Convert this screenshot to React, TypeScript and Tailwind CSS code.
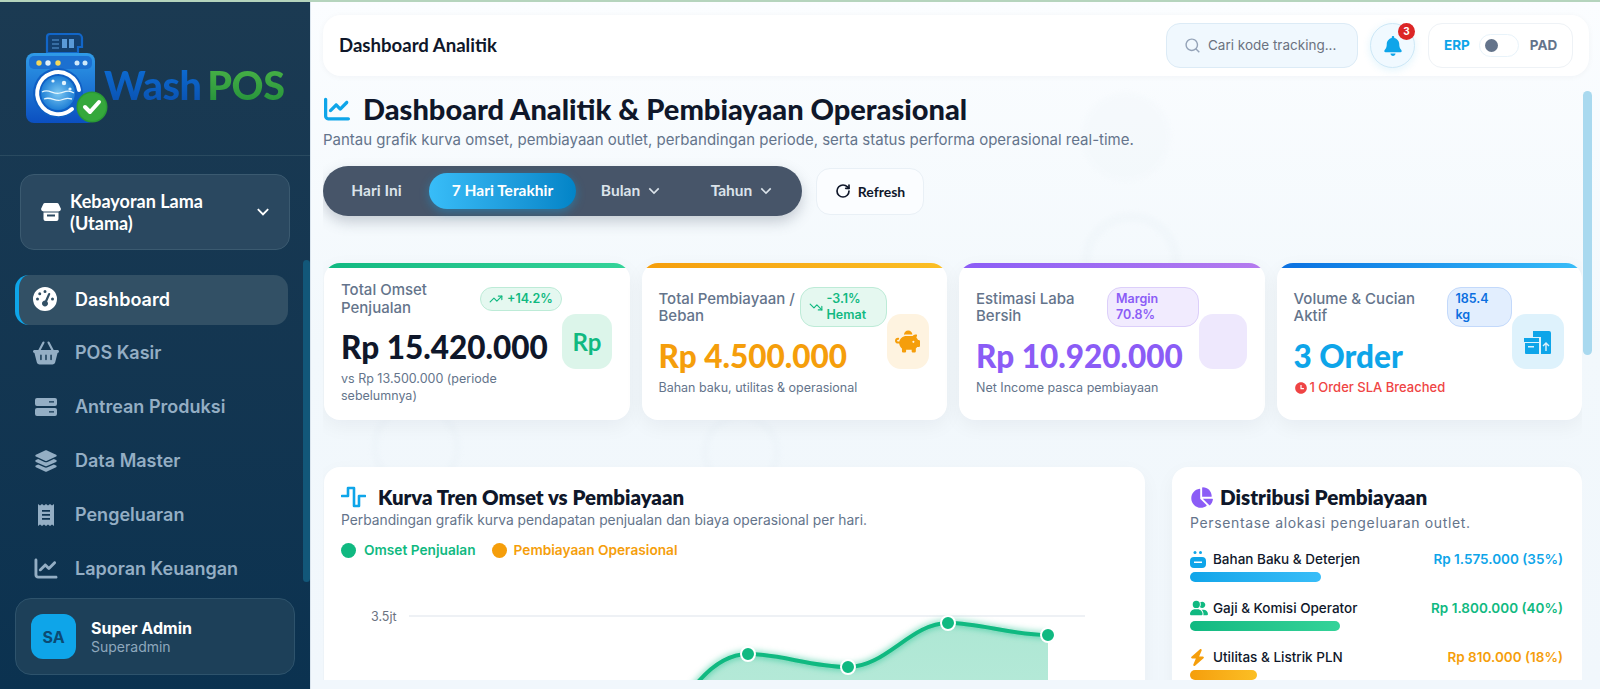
import React from "react";
import { RiArrowDownSLine, RiSearchLine, RiTimeFill } from "react-icons/ri";
import { FaPiggyBank, FaGaugeHigh, FaBasketShopping, FaLayerGroup, FaChartLine, FaBell, FaChartPie, FaUserGroup, FaBolt } from "react-icons/fa6";
import { TrendingUp, TrendingDown, RotateCw } from "lucide-react";

const head = "font-['Lato','Liberation_Sans',sans-serif]";

function Logo() {
  return (
    <svg width="82" height="92" viewBox="0 0 82 92" className="shrink-0">
      <defs>
        <linearGradient id="body" x1="0" y1="0" x2="0" y2="1"><stop offset="0" stopColor="#2f9be8" /><stop offset="1" stopColor="#0b4fc0" /></linearGradient>
        <radialGradient id="drum"><stop offset="0" stopColor="#7cc8f2" /><stop offset="1" stopColor="#1f7fd6" /></radialGradient>
      </defs>
      <path d="M21 21V5a3 3 0 0 1 3-3h28a4 4 0 0 1 4 4v9h-4v6z" fill="#14406f" stroke="#1266c8" strokeWidth="2.2" />
      <path d="M26 8h7M26 12h7M26 16h7" stroke="#5a9ad8" strokeWidth="1.2" />
      <rect x="36" y="7" width="5" height="9" fill="#5a9ad8" /><rect x="43" y="7" width="5" height="9" fill="#5a9ad8" />
      <rect x="0" y="21" width="69" height="70" rx="8" fill="url(#body)" />
      <rect x="3" y="24" width="63" height="13" rx="5" fill="#1c70d0" />
      <circle cx="13" cy="31" r="2.7" fill="#f5d85a" /><circle cx="22" cy="31" r="2.7" fill="#dff1fb" /><circle cx="32" cy="31" r="2.7" fill="#f5d85a" />
      <circle cx="51" cy="31" r="2.5" fill="#cfe9fa" /><circle cx="59" cy="31" r="2.5" fill="#cfe9fa" />
      <circle cx="32" cy="61" r="25" fill="#0f5fc4" />
      <circle cx="32" cy="61" r="17" fill="url(#drum)" />
      <path d="M16 60c7-4 11 3 18 1s9-3 14 0M18 67c7-3 11 3 17 1s7-2 11-1" stroke="#e3f4fd" strokeWidth="1.3" fill="none" />
      <circle cx="38" cy="51" r="2.2" fill="#e3f4fd" /><circle cx="27" cy="49" r="1.6" fill="#e3f4fd" /><circle cx="44" cy="57" r="1.6" fill="#e3f4fd" />
      <path d="M53 58A21 21 0 1 0 46 77" fill="none" stroke="#fff" strokeWidth="4" strokeLinecap="round" />
      <circle cx="66" cy="75" r="15.5" fill="#2a9a35" />
      <circle cx="66" cy="75" r="14" fill="#35a83c" />
      <path d="M59 75l5 5 9-10" fill="none" stroke="#fff" strokeWidth="4" strokeLinecap="round" strokeLinejoin="round" />
    </svg>
  );
}

function ServerIcon({ className }: { className?: string }) {
  return (
    <svg viewBox="0 0 24 20" className={className} fill="currentColor">
      <path fillRule="evenodd" d="M3 1h18a2 2 0 0 1 2 2v4a2 2 0 0 1-2 2H3a2 2 0 0 1-2-2V3a2 2 0 0 1 2-2zm12 3.2v1.3h5V4.200z" />
      <path fillRule="evenodd" d="M3 11h18a2 2 0 0 1 2 2v4a2 2 0 0 1-2 2H3a2 2 0 0 1-2-2v-4a2 2 0 0 1 2-2zm12 3.200v1.300h5v-1.300z" />
    </svg>
  );
}

function ReceiptIcon({ className }: { className?: string }) {
  return (
    <svg viewBox="0 0 20 24" className={className} fill="currentColor">
      <path fillRule="evenodd" d="M2 1l2 1.400L6 1l2 1.400L10 1l2 1.400L14 1l2 1.400L18 1v22l-2-1.400L14 23l-2-1.400L10 23l-2-1.400L6 23l-2-1.400L2 23zM6 7v1.800h8V7zm0 4v1.800h8V11zm0 4v1.800h8V15z" />
    </svg>
  );
}

function StoreIcon({ className }: { className?: string }) {
  return (
    <svg viewBox="0 0 20 20" className={className} fill="currentColor">
      <path d="M4 1h12a2 2 0 0 1 1.800 1.200L20 7a2.600 2.600 0 0 1-2.600 2.400H2.600A2.600 2.600 0 0 1 0 7l2.200-4.800A2 2 0 0 1 4 1z" />
      <path fillRule="evenodd" d="M2.500 10.500h15V17a2 2 0 0 1-2 2h-11a2 2 0 0 1-2-2zM6 12.500v2h8v-2z" />
    </svg>
  );
}

const navItems = [
  { label: "POS Kasir", icon: <FaBasketShopping className="w-[26px] h-[26px]" /> },
  { label: "Antrean Produksi", icon: <ServerIcon className="w-[24px] h-[20px]" /> },
  { label: "Data Master", icon: <FaLayerGroup className="w-[24px] h-[24px]" /> },
  { label: "Pengeluaran", icon: <ReceiptIcon className="w-[20px] h-[24px]" /> },
  { label: "Laporan Keuangan", icon: <FaChartLine className="w-[24px] h-[23px]" /> },
];

function Sidebar() {
  return (
    <aside className="w-[310px] shrink-0 flex flex-col bg-gradient-to-b from-[#1b3a52] to-[#0b3250] relative">
      <div className="h-[154px] shrink-0 border-b border-[#2a4a60] pt-[30px] pl-[26px] flex items-start">
        <Logo />
        <div className={`${head} -ml-[4px] mt-[30px] text-[39.500px] leading-[46px] font-black tracking-[-0.5px] flex gap-[6px]`}>
          <span className="bg-gradient-to-b from-[#0d6fd6] to-[#0a4fae] bg-clip-text text-transparent">Wash</span>
          <span className="bg-gradient-to-b from-[#4cb648] to-[#1f8f3a] bg-clip-text text-transparent">POS</span>
        </div>
      </div>
      <div className="mx-[20px] mt-[18px] h-[76px] w-[270px] rounded-[14px] bg-[#2a4860] border border-[#3b5a70] flex items-center pl-[20px] pr-[15px] text-white">
        <StoreIcon className="w-[20px] h-[20px] shrink-0 text-white" />
        <div className={`${head} ml-[9px] flex-1 text-[18px] leading-[22px] font-bold`}>Kebayoran Lama (Utama)</div>
        <RiArrowDownSLine className="w-[22px] h-[22px] shrink-0 text-white" />
      </div>
      <nav className="mt-[25px] flex-1 flex flex-col gap-[4px] pl-[15px] font-['Inter',sans-serif]">
        <div className="w-[273px] h-[50px] rounded-[14px] bg-[#325065] border-l-[4px] border-[#0ea5e9] flex items-center pl-[14px] pb-[2px] text-white text-[18px] font-semibold">
          <FaGaugeHigh className="w-[24px] h-[24px] shrink-0" />
          <span className="ml-[18px]">Dashboard</span>
        </div>
        {navItems.map(({ label, icon }) => (
          <div key={label} className="w-[273px] h-[50px] flex items-center pb-[3px] text-[#94aec4] text-[18px] font-semibold">
            <span className="w-[60px] pl-[2px] flex justify-center shrink-0">{icon}</span>
            <span>{label}</span>
          </div>
        ))}
      </nav>
      <div className="absolute right-0 top-[258px] w-[7px] h-[322px] rounded-[4px] bg-[#125779]" />
      <div className="ml-[15px] mb-[14px] w-[280px] h-[77px] shrink-0 rounded-[16px] bg-[#1d4059] border border-[#2e536c] flex items-center pl-[15px] font-['Inter',sans-serif]">
        <div className="w-[45px] h-[45px] rounded-[12px] bg-[#0ea5e9] flex items-center justify-center text-[#0b4a73] font-bold text-[16px]">SA</div>
        <div className="ml-[15px]">
          <div className="text-white font-bold text-[16px] leading-[20px]">Super Admin</div>
          <div className="text-[#8fa8bd] text-[14px] leading-[18px]">Superadmin</div>
        </div>
      </div>
    </aside>
  );
}

function Header() {
  return (
    <header className="relative ml-[12px] mt-[13px] w-[1266px] h-[61px] shrink-0 rounded-[18px] bg-white shadow-[0_1px_6px_rgba(15,23,42,0.04)] flex items-center pl-[16px] pr-[16px]">
      <div className={`${head} flex-1 text-[18.600px] font-bold text-[#0f172a]`}>Dashboard Analitik</div>
      <div className="w-[192px] h-[45px] rounded-[14px] bg-[#f0f8fe] border border-[#dcebf6] flex items-center pl-[17px] font-['Inter',sans-serif] text-[13.500px] text-[#6b7280]">
        <RiSearchLine className="w-[17px] h-[17px] text-[#94a3b8] shrink-0" />
        <span className="ml-[7px] whitespace-nowrap">Cari kode tracking...</span>
      </div>
      <div className="ml-[12px] relative w-[45px] h-[45px] rounded-full bg-[#f0f9ff] border border-[#cde8f7] shadow-[0_2px_8px_rgba(14,165,233,0.12)] flex items-center justify-center text-[#0ea5e9]">
        <FaBell className="w-[20px] h-[20px]" />
        <span className="absolute -top-[1px] -right-[1px] w-[17px] h-[17px] rounded-full bg-[#dc2626] text-white text-[10px] font-bold flex items-center justify-center font-['Inter',sans-serif]">3</span>
      </div>
      <div className="ml-[13px] w-[145px] h-[45px] rounded-[14px] bg-white border border-[#eef2f6] flex items-center pl-[15px] font-['Inter',sans-serif] text-[13.500px] font-bold">
        <span className="text-[#0ea5e9]">ERP</span>
        <span className="ml-[9px] w-[40px] h-[23px] rounded-full border border-[#e8f3fa] bg-white flex items-center pl-[5px]">
          <span className="w-[13px] h-[13px] rounded-full bg-[#64748b]" />
        </span>
        <span className="ml-[11px] text-[#64748b]">PAD</span>
      </div>
    </header>
  );
}

function Tabs() {
  const Chevron = <RiArrowDownSLine className="w-[20px] h-[20px] ml-[4px]" />;
  return (
    <div className="mt-[16px] flex items-center">
      <div className={`${head} w-[479px] h-[50px] rounded-full bg-[#475569] shadow-[0_6px_14px_rgba(71,85,105,0.28)] flex items-center pl-[6px] gap-[5px] text-[15.500px] font-bold text-[#dbe3ea]`}>
        <div className="w-[95px] h-[36px] flex items-center justify-center">Hari Ini</div>
        <div className="w-[147px] h-[36px] rounded-full bg-gradient-to-r from-[#38bdf8] to-[#0284c7] text-white flex items-center justify-center shadow-[0_3px_10px_rgba(14,165,233,0.4)]">7 Hari Terakhir</div>
        <div className="w-[103px] h-[36px] flex items-center justify-center">Bulan{Chevron}</div>
        <div className="w-[109px] h-[36px] flex items-center justify-center">Tahun{Chevron}</div>
      </div>
      <div className={`${head} ml-[14px] w-[108px] h-[47px] rounded-[14px] bg-[#fbfdff] border border-[#e9f0f6] flex items-center justify-center gap-[7px] text-[14px] font-bold text-[#0f172a]`}>
        <RotateCw className="w-[16px] h-[16px]" strokeWidth={2.500} />
        Refresh
      </div>
    </div>
  );
}

type KpiProps = {
  bar: string; label: string; badge: React.ReactNode; badgeCls: string; value: string; valueCls: string;
  sub: React.ReactNode; iconCls: string; icon?: React.ReactNode; colW: string; iconW: string; labelW: string;
};

function Kpi({ bar, label, badge, badgeCls, value, valueCls, sub, iconCls, icon, colW, iconW, labelW }: KpiProps) {
  return (
    <div className="h-[157px] rounded-[16px] bg-white shadow-[0_6px_20px_rgba(15,23,42,0.05)] overflow-hidden flex flex-col">
      <div className={`h-[5px] shrink-0 ${bar}`} />
      <div className="flex-1 flex items-center pl-[17px]">
        <div className={`${colW} shrink-0 mb-[5px]`}>
          <div className="flex items-center min-h-[38px]">
            <div className={`${labelW} shrink-0 font-['Inter',sans-serif] text-[15px] leading-[17.500px] font-medium text-[#64748b]`}>{label}</div>
            <div className={`flex-1 rounded-[14px] border px-[8px] py-[3px] font-['Inter',sans-serif] text-[12.500px] leading-[16px] font-semibold ${badgeCls}`}>{badge}</div>
          </div>
          <div className={`${head} mt-[9px] text-[31.500px] leading-[40px] font-black whitespace-nowrap ${valueCls}`}>{value}</div>
          <div className="mt-[3px] pr-[20px] font-['Inter',sans-serif] text-[12.500px] leading-[17px] text-[#64748b]">{sub}</div>
        </div>
        <div className={`${iconW} h-[55px] mb-[5px] shrink-0 rounded-[14px] flex items-center justify-center ${iconCls}`}>{icon}</div>
      </div>
    </div>
  );
}

function Chart() {
  const line = "M307 190C340 120 370 78 407 78C440 78 470 91 507 91C545 91 570 47 607 47C640 47 670 59 707 59";
  return (
    <svg width="790" height="110" viewBox="0 0 790 110" className="mt-[17px] block overflow-visible">
      <defs>
        <linearGradient id="area" x1="0" y1="0" x2="0" y2="1"><stop offset="0" stopColor="#10b981" stopOpacity="0.34" /><stop offset="1" stopColor="#10b981" stopOpacity="0.28" /></linearGradient>
        <filter id="glow" x="-10%" y="-50%" width="120%" height="200%"><feGaussianBlur stdDeviation="3" /></filter>
      </defs>
      <line x1="68" y1="40" x2="744" y2="40" stroke="#e8edf2" strokeWidth="1.500" />
      <text x="30" y="45" fontSize="12.500" fill="#6b7280" fontFamily="Inter, sans-serif">3.5jt</text>
      <path d={`${line}V190Z`} fill="url(#area)" />
      <path d={line} fill="none" stroke="#10b981" strokeOpacity="0.5" strokeWidth="6" filter="url(#glow)" />
      <path d={line} fill="none" stroke="#10b981" strokeWidth="4" />
      {[[407, 78], [507, 91], [607, 47], [707, 59]].map(([x, y]) => (
        <circle key={x} cx={x} cy={y} r="7" fill="#10b981" stroke="#fff" strokeWidth="2" />
      ))}
    </svg>
  );
}

function Dist({ Icon, label, amount, color, bar, w }: { Icon: React.ReactNode; label: string; amount: string; color: string; bar: string; w: string }) {
  return (
    <div className="h-[49px]">
      <div className="flex items-center h-[20px] text-[13.500px] font-semibold font-['Inter',sans-serif]">
        <span className="w-[23px] shrink-0 flex items-center">{Icon}</span>
        <span className="flex-1 text-[#0f172a] font-medium">{label}</span>
        <span className={color}>{amount}</span>
      </div>
      <div className={`mt-[3px] h-[10px] rounded-full ${bar} ${w}`} />
    </div>
  );
}

export default function App() {
  return (
    <div className="w-[1600px] h-[689px] overflow-hidden flex flex-col bg-[#f1f7fc]">
      <div className="h-[2px] shrink-0 bg-[#b5d4bd]" />
      <div className="flex-1 flex min-h-0">
        <Sidebar />
        <main className="w-[1290px] flex flex-col border-l border-[#dbe5ee] bg-gradient-to-b from-[#fbfdff] via-[#f2f8fc] to-[#f1f7fc] relative overflow-hidden">
          <div className="absolute left-[770px] top-[90px] w-[90px] h-[90px] rounded-full bg-[#eef4f8] opacity-25 blur-[2px]" />
          <div className="absolute left-[770px] top-[210px] w-[100px] h-[100px] rounded-full border-[10px] border-[#e9f1f6] opacity-30 blur-[2px]" />
          <div className="absolute left-[60px] top-[400px] w-[90px] h-[90px] rounded-full border-[8px] border-[#e8f0f6] opacity-30 blur-[2px]" />
          <div className="absolute left-[390px] top-[410px] w-[80px] h-[80px] rounded-full border-[8px] border-[#e8f0f6] opacity-30 blur-[2px]" />
          <Header />
          <div className="absolute right-[8px] top-[89px] w-[9px] h-[264px] rounded-[5px] bg-[#a9d9ef]" />
          <div className="relative ml-[12px] mr-[18px] mb-[9px] flex-1 min-h-0 overflow-hidden">
            <div className="mt-[15px] flex items-center h-[36px]">
              <FaChartLine className="w-[28px] h-[26px] text-[#0ea5e9] -ml-[0px]" />
              <h1 className={`${head} ml-[12px] text-[29px] leading-[36px] font-black text-[#0f172a] whitespace-nowrap`}>Dashboard Analitik &amp; Pembiayaan Operasional</h1>
            </div>
            <p className="mt-[3px] font-['Inter',sans-serif] text-[15px] leading-[20px] text-[#64748b] whitespace-nowrap">Pantau grafik kurva omset, pembiayaan outlet, perbandingan periode, serta status performa operasional real-time.</p>
            <Tabs />
            <div className="mt-[47px] ml-[1px] grid grid-cols-4 gap-[12px]">
              <Kpi bar="bg-gradient-to-r from-[#10b981] to-[#34d399]" label="Total Omset Penjualan" labelW="w-[139px]" colW="w-[221px]" iconW="w-[50px]"
                badge={<span className="flex items-center gap-[4px] whitespace-nowrap"><TrendingUp className="w-[14px] h-[14px]" />+14.2%</span>}
                badgeCls="bg-[#e5f8f0] border-[#bdebd7] text-[#10b981]" value="Rp 15.420.000" valueCls="text-[#0f172a]" sub="vs Rp 13.500.000 (periode sebelumnya)" iconCls="bg-[#dcf5ea] text-[#10b981]"
                icon={<span className={`${head} text-[24px] font-bold`}>Rp</span>} />
              <Kpi bar="bg-gradient-to-r from-[#f59e0b] to-[#fbbf24]" label="Total Pembiayaan / Beban" labelW="w-[141px]" colW="w-[228px]" iconW="w-[42px]"
                badge={<span className="flex items-center gap-[4px]"><TrendingDown className="w-[14px] h-[14px] shrink-0" /><span>-3.1% Hemat</span></span>}
                badgeCls="bg-[#e5f8f0] border-[#bdebd7] text-[#10b981]" value="Rp 4.500.000" valueCls="text-[#f59e0b]" sub="Bahan baku, utilitas & operasional" iconCls="bg-[#fef3e0] text-[#f59e0b]"
                icon={<FaPiggyBank className="w-[25px] h-[25px]" />} />
              <Kpi bar="bg-gradient-to-r from-[#8b5cf6] to-[#b57bee]" label="Estimasi Laba Bersih" labelW="w-[131px]" colW="w-[223px]" iconW="w-[48px]"
                badge="Margin 70.8%" badgeCls="bg-[#f1ebfe] border-[#dccffa] text-[#8b5cf6]" value="Rp 10.920.000" valueCls="text-[#8b5cf6]" sub="Net Income pasca pembiayaan" iconCls="bg-[#eee8fd]" />
              <Kpi bar="bg-gradient-to-r from-[#0b6fe0] to-[#38bdf8]" label="Volume & Cucian Aktif" labelW="w-[153px] pr-[25px]" colW="w-[218px]" iconW="w-[52px]"
                badge="185.4 kg" badgeCls="bg-[#e2eefe] border-[#c3d9fb] text-[#0b6fe0]" value="3 Order" valueCls="text-[#0ea5e9]"
                sub={<span className="flex items-center gap-[2px] whitespace-nowrap text-[#ef4444] font-medium text-[13px]"><RiTimeFill className="w-[14px] h-[14px]" />1 Order SLA Breached</span>} iconCls="bg-[#def2fc] text-[#0ea5e9]"
                icon={
                  <svg width="28" height="28" viewBox="0 0 28 28" fill="currentColor">
                    <path d="M9 3h16a2 2 0 0 1 2 2v20a1 1 0 0 1-1 1H17V9H9z" />
                    <rect x="0" y="10" width="15" height="4" />
                    <path d="M1 15h14v11H2a1 1 0 0 1-1-1zM4 18v1.600h6V18z" fillRule="evenodd" />
                    <path d="M22 23v-8M19 18l3-3 3 3" stroke="#def2fc" strokeWidth="1.400" fill="none" />
                  </svg>
                } />
            </div>
            <div className="mt-[47px] ml-[1px] flex items-start">
              <section className="w-[821px] h-[400px] rounded-[16px] bg-white pt-[18px] pl-[17px] shadow-[0_6px_20px_rgba(15,23,42,0.04)]">
                <div className="flex items-center h-[24px]">
                  <svg width="25" height="22" viewBox="0 0 25 22" fill="none" stroke="#0ea5e9" strokeWidth="2.600" strokeLinecap="round" strokeLinejoin="round"><path d="M1 10h6V2h6v18h5V10h6" /></svg>
                  <h2 className={`${head} ml-[12px] text-[20.400px] font-extrabold text-[#0f172a] whitespace-nowrap`}>Kurva Tren Omset vs Pembiayaan</h2>
                </div>
                <p className="mt-[2px] font-['Inter',sans-serif] text-[13.800px] leading-[18px] text-[#64748b]">Perbandingan grafik kurva pendapatan penjualan dan biaya operasional per hari.</p>
                <div className="mt-[12px] h-[18px] flex items-center font-['Inter',sans-serif] text-[13.700px] font-semibold">
                  <span className="w-[15px] h-[15px] rounded-full bg-[#10b981]" />
                  <span className="ml-[8px] text-[#10b981]">Omset Penjualan</span>
                  <span className="ml-[16px] w-[15px] h-[15px] rounded-full bg-[#f59e0b]" />
                  <span className="ml-[7px] text-[#f59e0b]">Pembiayaan Operasional</span>
                </div>
                <Chart />
              </section>
              <section className="ml-[27px] w-[410px] h-[400px] rounded-[16px] bg-white pt-[18px] pl-[18px] pr-[19px] shadow-[0_6px_20px_rgba(15,23,42,0.04)]">
                <div className="flex items-center h-[24px]">
                  <FaChartPie className="w-[23px] h-[23px] text-[#8b5cf6]" />
                  <h2 className={`${head} ml-[7px] text-[20.600px] font-extrabold text-[#0f172a] whitespace-nowrap`}>Distribusi Pembiayaan</h2>
                </div>
                <p className="mt-[4px] font-['Inter',sans-serif] text-[14px] leading-[20px] tracking-[0.65px] text-[#64748b]">Persentase alokasi pengeluaran outlet.</p>
                <div className="mt-[16px]">
                  <Dist Icon={<svg width="16" height="18" viewBox="0 0 16 18" fill="#0ea5e9"><path fillRule="evenodd" d="M4 7h8a4 4 0 0 1 4 4v3a4 4 0 0 1-4 4H4a4 4 0 0 1-4-4v-3a4 4 0 0 1 4-4zM4 11.500v1.500h8v-1.500z" /><circle cx="5" cy="2.500" r="1.500" /><circle cx="10.500" cy="2.500" r="1.500" /></svg>} label="Bahan Baku & Deterjen" amount="Rp 1.575.000 (35%)" color="text-[#0ea5e9]" bar="bg-gradient-to-r from-[#0ea5e9] to-[#38bdf8]" w="w-[131px]" />
                  <Dist Icon={<FaUserGroup className="w-[18px] h-[16px] text-[#10b981]" />} label="Gaji & Komisi Operator" amount="Rp 1.800.000 (40%)" color="text-[#10b981]" bar="bg-gradient-to-r from-[#10b981] to-[#34d399]" w="w-[150px]" />
                  <Dist Icon={<FaBolt className="w-[15px] h-[17px] text-[#f59e0b]" />} label="Utilitas & Listrik PLN" amount="Rp 810.000 (18%)" color="text-[#f59e0b]" bar="bg-gradient-to-r from-[#f59e0b] to-[#fbbf24]" w="w-[67px]" />
                </div>
              </section>
            </div>
          </div>
        </main>
      </div>
    </div>
  );
}
